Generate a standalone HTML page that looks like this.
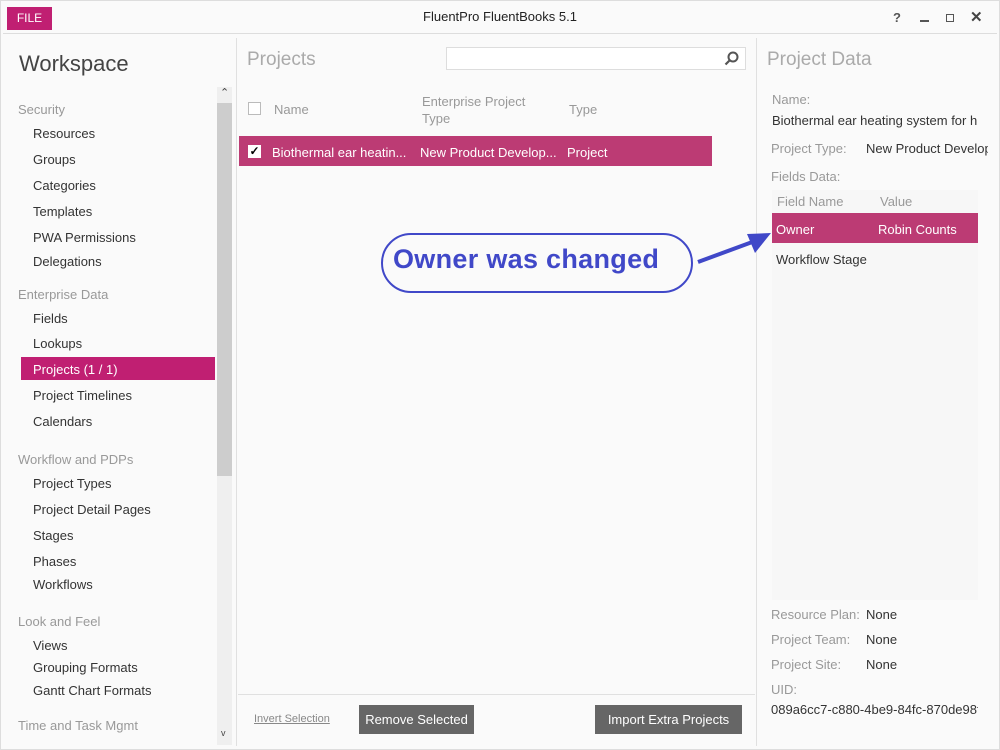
<!DOCTYPE html>
<html><head><meta charset="utf-8"><style>
*{margin:0;padding:0;box-sizing:border-box}
body{width:1000px;height:750px;background:#fafafa;font-family:"Liberation Sans",sans-serif;position:relative;overflow:hidden;color:#333;font-size:13px}
.a{position:absolute;white-space:nowrap}
.g{color:#999}
.h{color:#aaa;font-size:19px}
</style></head><body>
<div class="a" style="left:0;top:0;width:1000px;height:750px;border:1px solid #ddd"></div>
<div class="a" style="left:7px;top:7px;width:45px;height:23px;background:#c01f72;color:#fff;font-size:12px;text-align:center;line-height:23px">FILE</div>
<div class="a" style="left:0;top:9px;width:1000px;text-align:center;font-size:13px;color:#222">FluentPro FluentBooks 5.1</div>
<div class="a" style="left:893px;top:10px;font-size:13px;font-weight:bold;color:#555">?</div>
<div class="a" style="left:920px;top:20px;width:9px;height:2px;background:#555"></div>
<div class="a" style="left:946px;top:14px;width:8px;height:8px;border:1.5px solid #555"></div>
<div class="a" style="left:970px;top:8px;font-size:15px;font-weight:bold;color:#444">✕</div>
<div class="a" style="left:3px;top:33px;width:994px;height:1px;background:#ddd"></div>
<div class="a" style="left:236px;top:38px;width:1px;height:708px;background:#e0e0e0"></div>
<div class="a" style="left:756px;top:38px;width:1px;height:708px;background:#e0e0e0"></div>

<div class="a" style="left:19px;top:51px;font-size:22px;color:#444">Workspace</div>
<div class="a" style="left:217px;top:87px;width:15px;height:658px;background:#efefef"></div>
<div class="a" style="left:217px;top:103px;width:15px;height:373px;background:#cdcdcd"></div>
<div class="a" style="left:220px;top:86px;font-size:11px;color:#444">⌃</div>
<div class="a" style="left:221px;top:728px;font-size:9px;color:#444">v</div>
<div class="a" style="left:21px;top:357px;width:194px;height:23px;background:#c01f72"></div>
<div class="a g" style="left:18px;top:102px">Security</div>
<div class="a" style="left:33px;top:126px">Resources</div>
<div class="a" style="left:33px;top:152px">Groups</div>
<div class="a" style="left:33px;top:178px">Categories</div>
<div class="a" style="left:33px;top:204px">Templates</div>
<div class="a" style="left:33px;top:230px">PWA Permissions</div>
<div class="a" style="left:33px;top:254px">Delegations</div>
<div class="a g" style="left:18px;top:287px">Enterprise Data</div>
<div class="a" style="left:33px;top:311px">Fields</div>
<div class="a" style="left:33px;top:336px">Lookups</div>
<div class="a" style="left:33px;top:362px;color:#fff">Projects (1 / 1)</div>
<div class="a" style="left:33px;top:388px">Project Timelines</div>
<div class="a" style="left:33px;top:414px">Calendars</div>
<div class="a g" style="left:18px;top:452px">Workflow and PDPs</div>
<div class="a" style="left:33px;top:476px">Project Types</div>
<div class="a" style="left:33px;top:502px">Project Detail Pages</div>
<div class="a" style="left:33px;top:528px">Stages</div>
<div class="a" style="left:33px;top:554px">Phases</div>
<div class="a" style="left:33px;top:577px">Workflows</div>
<div class="a g" style="left:18px;top:614px">Look and Feel</div>
<div class="a" style="left:33px;top:638px">Views</div>
<div class="a" style="left:33px;top:660px">Grouping Formats</div>
<div class="a" style="left:33px;top:683px">Gantt Chart Formats</div>
<div class="a g" style="left:18px;top:718px">Time and Task Mgmt</div>

<div class="a h" style="left:247px;top:49px">Projects</div>
<div class="a" style="left:446px;top:47px;width:300px;height:23px;border:1px solid #ddd;background:#fff"></div>
<svg class="a" style="left:724px;top:51px" width="15" height="15"><circle cx="9" cy="6" r="4.5" fill="none" stroke="#555" stroke-width="2"/><line x1="6" y1="9" x2="1.5" y2="13.5" stroke="#555" stroke-width="2.2"/></svg>
<div class="a" style="left:248px;top:102px;width:13px;height:13px;border:1px solid #bbb;background:#fff"></div>
<div class="a g" style="left:274px;top:102px">Name</div>
<div class="a g" style="left:422px;top:93px;line-height:17px">Enterprise Project<br>Type</div>
<div class="a g" style="left:569px;top:102px">Type</div>
<div class="a" style="left:239px;top:136px;width:473px;height:30px;background:#bc3b74"></div>
<div class="a" style="left:248px;top:145px;width:13px;height:13px;background:#fff;color:#000;font-size:12px;line-height:13px;text-align:center;font-weight:bold">✓</div>
<div class="a" style="left:272px;top:145px;color:#fff">Biothermal ear heatin...</div>
<div class="a" style="left:420px;top:145px;color:#fff">New Product Develop...</div>
<div class="a" style="left:567px;top:145px;color:#fff">Project</div>
<div class="a" style="left:238px;top:694px;width:517px;height:1px;background:#e0e0e0"></div>
<div class="a" style="left:254px;top:713px;font-size:11px;color:#888;text-decoration:underline">Invert Selection</div>
<div class="a" style="left:359px;top:705px;width:115px;height:29px;background:#666;color:#fff;text-align:center;line-height:29px">Remove Selected</div>
<div class="a" style="left:595px;top:705px;width:147px;height:29px;background:#666;color:#fff;text-align:center;line-height:29px">Import Extra Projects</div>

<div class="a" style="left:381px;top:233px;width:312px;height:60px;border:2px solid #4048c8;border-radius:30px"></div>
<div class="a" style="left:393px;top:244px;font-size:27px;font-weight:bold;color:#4048c8;letter-spacing:0.3px">Owner was changed</div>
<svg class="a" style="left:695px;top:225px" width="80" height="45"><line x1="3" y1="37" x2="60" y2="16" stroke="#4048c8" stroke-width="4"/><polygon points="76,8 52,9 60,28" fill="#4048c8"/></svg>

<div class="a h" style="left:767px;top:49px">Project Data</div>
<div class="a g" style="left:772px;top:92px">Name:</div>
<div class="a" style="left:772px;top:113px;width:206px;overflow:hidden">Biothermal ear heating system for h</div>
<div class="a g" style="left:771px;top:141px">Project Type:</div>
<div class="a" style="left:866px;top:141px;width:122px;overflow:hidden">New Product Development</div>
<div class="a g" style="left:771px;top:169px">Fields Data:</div>
<div class="a" style="left:772px;top:190px;width:206px;height:410px;background:#f7f7f7"></div>
<div class="a g" style="left:777px;top:194px">Field Name</div>
<div class="a g" style="left:880px;top:194px">Value</div>
<div class="a" style="left:772px;top:213px;width:206px;height:30px;background:#bc3b74"></div>
<div class="a" style="left:776px;top:222px;color:#fff">Owner</div>
<div class="a" style="left:878px;top:222px;color:#fff">Robin Counts</div>
<div class="a" style="left:776px;top:252px">Workflow Stage</div>
<div class="a g" style="left:771px;top:607px">Resource Plan:</div><div class="a" style="left:866px;top:607px">None</div>
<div class="a g" style="left:771px;top:632px">Project Team:</div><div class="a" style="left:866px;top:632px">None</div>
<div class="a g" style="left:771px;top:657px">Project Site:</div><div class="a" style="left:866px;top:657px">None</div>
<div class="a g" style="left:771px;top:682px">UID:</div>
<div class="a" style="left:771px;top:702px;width:207px;overflow:hidden">089a6cc7-c880-4be9-84fc-870de98f</div>
</body></html>
